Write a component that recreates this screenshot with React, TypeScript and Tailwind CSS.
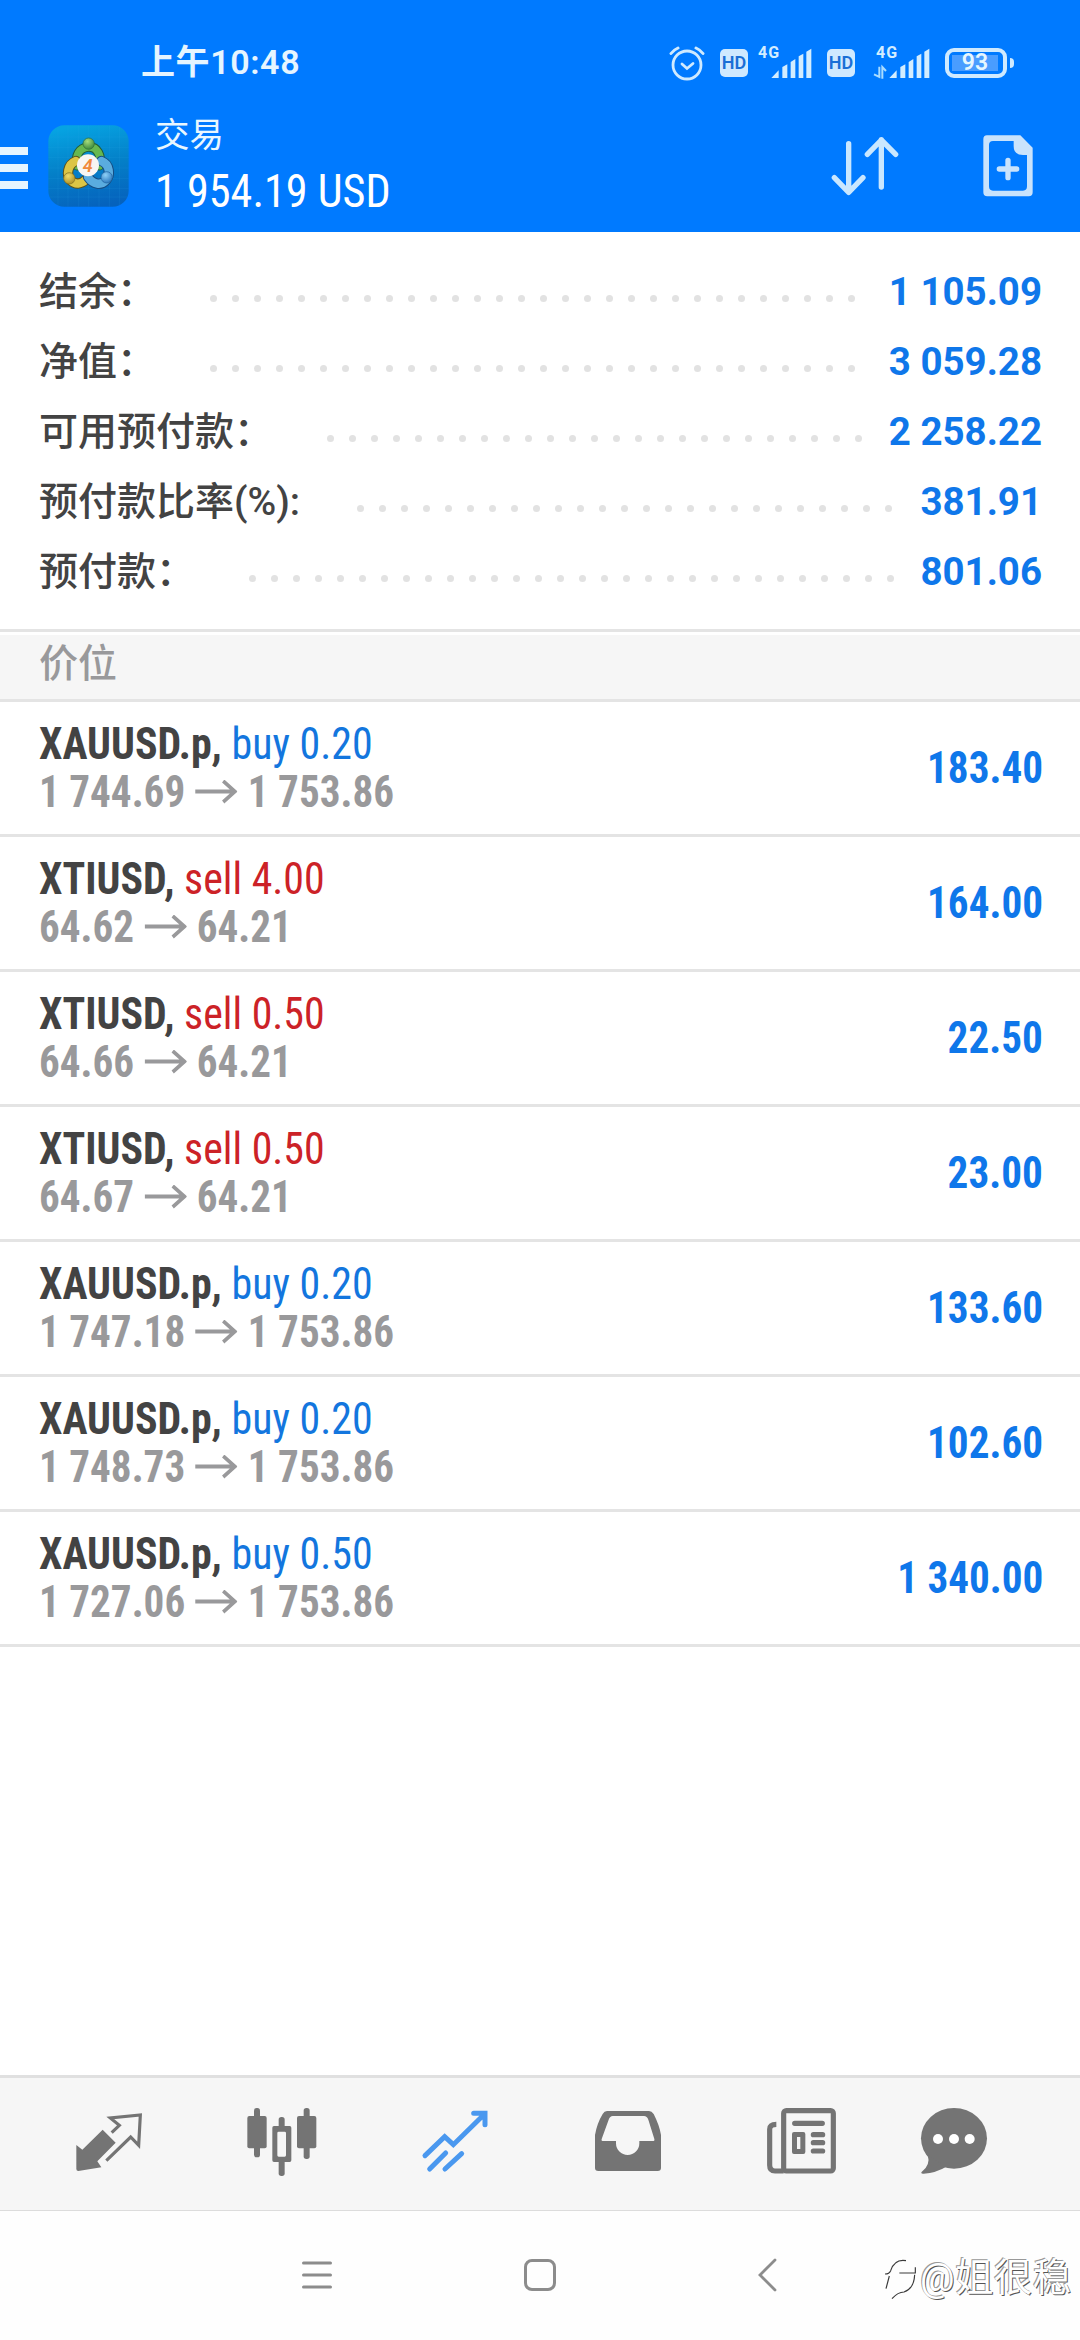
import { ReactNode } from 'react'
import clsx from 'clsx'

const summary = [
  { label: '结余：', value: '1 105.09', dots: 30 },
  { label: '净值：', value: '3 059.28', dots: 30 },
  { label: '可用预付款：', value: '2 258.22', dots: 25 },
  { label: '预付款比率(%):', value: '381.91', dots: 25 },
  { label: '预付款：', value: '801.06', dots: 30 },
]

const positions = [
  { symbol: 'XAUUSD.p', side: 'buy', volume: '0.20', open: '1 744.69', current: '1 753.86', profit: '183.40' },
  { symbol: 'XTIUSD', side: 'sell', volume: '4.00', open: '64.62', current: '64.21', profit: '164.00' },
  { symbol: 'XTIUSD', side: 'sell', volume: '0.50', open: '64.66', current: '64.21', profit: '22.50' },
  { symbol: 'XTIUSD', side: 'sell', volume: '0.50', open: '64.67', current: '64.21', profit: '23.00' },
  { symbol: 'XAUUSD.p', side: 'buy', volume: '0.20', open: '1 747.18', current: '1 753.86', profit: '133.60' },
  { symbol: 'XAUUSD.p', side: 'buy', volume: '0.20', open: '1 748.73', current: '1 753.86', profit: '102.60' },
  { symbol: 'XAUUSD.p', side: 'buy', volume: '0.50', open: '1 727.06', current: '1 753.86', profit: '1 340.00' },
]

function HdBadge() {
  return (
    <div className="w-7 h-7 rounded-[5px] bg-[#cfe9ff] flex items-center justify-center text-[18px] leading-none font-semibold text-[#1a6fd6]">
      HD
    </div>
  )
}

function Signal({ data }: { data?: boolean }) {
  return (
    <svg className="w-[60px] h-11 -mt-2" viewBox="0 -24 180 132" fill="#d3edff">
      <text x="12" y="38" fontSize="48" fontWeight="700" letterSpacing="3">4G</text>
      {data && (
        <path d="M22 65V96L6 88M31 101V66L42 78" fill="none" stroke="#a9dcff" strokeWidth="6" />
      )}
      <path d="M52 99L74 76V99ZM85 99V66L100 58V99ZM110 99V51L124 42V99ZM134 99V34L148 26V99ZM157 99V20L172 11V99Z" />
    </svg>
  )
}

function StatusBar() {
  return (
    <div className="h-[100px] pt-[25px] flex items-center">
      <span className="ml-[141px] text-[34px] font-semibold tracking-[0.6px] text-[#e6f5ff]">上午10:48</span>
      <div className="ml-auto flex items-center pr-[66px]">
        <svg className="w-9 h-9" viewBox="0 0 36 36" fill="none" stroke="#cfeaff" strokeLinecap="round">
          <circle cx="18" cy="20" r="14" strokeWidth="2.8" />
          <path d="M13 19L18 23.5L24 18.5" strokeWidth="2.8" />
          <path d="M2 8.5Q4.500 5 9 3M34 8.500Q31.500 5 27 3" strokeWidth="3" />
        </svg>
        <div className="ml-[15px]"><HdBadge /></div>
        <div className="ml-[6px]"><Signal /></div>
        <div className="ml-[13px]"><HdBadge /></div>
        <div className="ml-[17px]"><Signal data /></div>
        <div className="ml-[13px] w-[62px] h-[30px] rounded-[9px] border-4 border-[#cfeaff] p-[3px]">
          <div className="h-full w-[46px] bg-[#4a9dff] flex items-center justify-center text-[23px] leading-none font-semibold text-[#e6f7ff]">
            93
          </div>
        </div>
        <div className="ml-[3px] w-1 h-[10px] rounded-r-sm bg-[#cfeaff]" />
      </div>
    </div>
  )
}

function AppLogo() {
  return (
    <svg className="w-[81px] h-[82px]" viewBox="0 0 243 246">
      <defs>
        <linearGradient id="tile" x1="0.4" y1="0" x2="0.6" y2="1">
          <stop offset="0" stopColor="#06a3e2" />
          <stop offset="0.5" stopColor="#0480c8" />
          <stop offset="1" stopColor="#0562bd" />
        </linearGradient>
        <radialGradient id="green" cx="0.4" cy="0.3" r="0.8">
          <stop offset="0" stopColor="#a6dc7c" />
          <stop offset="1" stopColor="#2f7f35" />
        </radialGradient>
        <radialGradient id="gold" cx="0.4" cy="0.3" r="0.8">
          <stop offset="0" stopColor="#f0de6c" />
          <stop offset="1" stopColor="#a8871c" />
        </radialGradient>
        <radialGradient id="blue" cx="0.4" cy="0.3" r="0.8">
          <stop offset="0" stopColor="#8fd0f7" />
          <stop offset="1" stopColor="#1f6fb8" />
        </radialGradient>
      </defs>
      <rect x="1" y="1" width="241" height="244" rx="48" fill="url(#tile)" />
      <path d="M30 6V240M60 1V245M92 1V245M122 1V245M153 1V245M184 1V245M214 6V240M6 36H237M1 68H242M1 98H242M1 129H242M1 160H242M1 190H242M6 216H237" stroke="#3bb6ea" strokeOpacity="0.18" strokeWidth="2" />
      <g fill="none" strokeLinecap="round">
        <path d="M88 122C80 92 94 68 121 66S162 92 154 122" stroke="#235c36" strokeWidth="29" />
        <path d="M88 122C80 92 94 68 121 66S162 92 154 122" stroke="#66b850" strokeWidth="23" />
        <path d="M84 108C58 118 54 152 68 166S100 178 114 164" stroke="#5c531d" strokeWidth="31" />
        <path d="M84 108C58 118 54 152 68 166S100 178 114 164" stroke="#dcc545" strokeWidth="25" />
        <path d="M160 108C186 118 188 150 174 166S136 180 120 156" stroke="#164d83" strokeWidth="31" />
        <path d="M160 108C186 118 188 150 174 166S136 180 120 156" stroke="#5aacdf" strokeWidth="25" />
      </g>
      <circle cx="122" cy="56" r="17" fill="url(#green)" stroke="#2f6b38" strokeWidth="2" />
      <circle cx="64" cy="160" r="17" fill="url(#gold)" stroke="#7a6c22" strokeWidth="2" />
      <circle cx="176" cy="157" r="17" fill="url(#blue)" stroke="#1e5f9c" strokeWidth="2" />
      <circle cx="120" cy="121" r="33" fill="#f8f6f3" />
      <text x="119" y="140" textAnchor="middle" fontSize="54" fontWeight="600" fontStyle="italic" fill="#f08a3c">4</text>
    </svg>
  )
}

function TitleBar() {
  return (
    <div className="h-[132px] flex items-center text-[#e9f7ff]">
      <div className="w-7 flex flex-col gap-[9px] mt-[3px]">
        <div className="h-2 bg-[#e6f5ff]" />
        <div className="h-2 bg-[#e6f5ff]" />
        <div className="h-2 bg-[#e6f5ff]" />
      </div>
      <div className="ml-5"><AppLogo /></div>
      <div className="ml-[26px] pb-[6px] flex flex-col">
        <span className="text-[34.5px] leading-[56px]">交易</span>
        <span className="text-[47px] leading-[56px] font-['Roboto_Condensed'] text-white origin-left scale-x-[0.94]">1 954.19 USD</span>
      </div>
      <svg className="ml-auto w-[70px] h-[62px]" viewBox="0 0 210 186" fill="none" stroke="#c9e7ff" strokeWidth="16" strokeLinecap="round" strokeLinejoin="round">
        <path d="M56 26V168M13 128L56 172L99 128" />
        <path d="M154 156V14M112 58L154 15L197 58" />
      </svg>
      <svg className="ml-[83px] mr-[47px] w-[50px] h-[62px]" viewBox="0 0 150 186">
        <path fillRule="evenodd" fill="#c9e3fc" d="M12 1H112L149 38V172Q149 184 137 184H13Q1 184 1 172V13Q1 1 12 1ZM92 18H30Q18 18 18 30V154Q18 167 30 167H120Q132 167 132 154V60H120Q92 60 92 34Z" />
        <path d="M75 76V128M49 102H101" stroke="#c9e3fc" strokeWidth="16" strokeLinecap="round" />
      </svg>
    </div>
  )
}

function PositionRow({ position }: { position: (typeof positions)[number] }) {
  return (
    <div className="h-[135px] border-b-[3px] border-[#e4e4e4] pl-[39px] pr-[37px] flex items-center justify-between font-['Roboto_Condensed']">
      <div className="text-[44px] leading-[48px]">
        <div className="origin-left scale-x-[0.952]">
          <span className="font-bold text-[#434343]">{position.symbol},</span>{' '}
          <span className={clsx(position.side === 'buy' ? 'text-[#1376de]' : 'text-[#cc2227]')}>
            {position.side} {position.volume}
          </span>
        </div>
        <div className="flex items-center font-bold text-[#99999b] origin-left scale-x-[0.935]">
          <span>{position.open}</span>
          <svg className="w-[45px] h-6 mx-[11px]" viewBox="0 0 45 24" fill="none" stroke="#99999b" strokeWidth="3.8">
            <path d="M0 11.500H42M30 1L42.500 11.500L30 22" />
          </svg>
          <span>{position.current}</span>
        </div>
      </div>
      <div className="text-[44px] leading-[48px] font-bold text-[#0f77ea] origin-right scale-x-[0.935]">{position.profit}</div>
    </div>
  )
}

function Tab({ viewBox, last, children }: { viewBox: string; last?: boolean; children: ReactNode }) {
  return (
    <div className={clsx('flex items-center justify-center', last ? 'w-[133px]' : 'w-[173px]')}>
      <svg className="w-20 h-20" viewBox={viewBox} fill="#747474">
        {children}
      </svg>
    </div>
  )
}

function TabBar() {
  return (
    <div className="h-[136px] border-t-[3px] border-b border-t-[#e0e0e0] border-b-[#dcdcdc] bg-[#f6f6f6] pl-[22px] flex">
      <Tab viewBox="26 42 240 240">
        <path d="M127 119L166 158L111 214L123 232L54 243Q48 243 48 237V165L66 179Z" />
        <path d="M154 128L177 106L150 84L240 75L235 166L211 141L138 212" fill="none" stroke="#747474" strokeWidth="9.500" />
      </Tab>
      <Tab viewBox="544 42 240 240">
        <rect x="560" y="78" width="58" height="97" rx="6" />
        <rect x="580" y="54" width="18" height="148" rx="8" />
        <rect x="709" y="78" width="58" height="97" rx="6" />
        <rect x="729" y="54" width="18" height="153" rx="8" />
        <rect x="654" y="81" width="18" height="40" rx="8" />
        <rect x="654" y="205" width="18" height="53" rx="8" />
        <path fillRule="evenodd" d="M640 108H687Q692 108 692 113V211Q692 216 687 216H640Q635 216 635 211V113Q635 108 640 108ZM654 125Q650 125 650 129V196Q650 200 654 200H672Q676 200 676 196V129Q676 125 672 125Z" />
      </Tab>
      <Tab viewBox="1062 42 240 240">
        <path
          d="M1092 197L1151 140L1177 164L1270 73M1238 70H1272V104M1106 237L1154 189M1152 237L1202 191"
          fill="none"
          stroke="#4a98ef"
          strokeWidth="15"
          strokeLinecap="round"
        />
      </Tab>
      <Tab viewBox="23 42 240 240">
        <path
          fillRule="evenodd"
          d="M80 63H206Q214 63 220 72Q237 105 242 135V234Q242 243 232 243H54Q44 243 44 234V135Q50 100 67 72Q72 63 80 63ZM97 78Q89 78 85 89L64 147Q62 152 66 153H107V160A35 35 0 0 0 177 160V153H220Q224 152 222 147L204 89Q200 78 191 78Z"
        />
      </Tab>
      <Tab viewBox="542 42 240 240">
        <g fill="none" stroke="#747474" strokeWidth="15.500" strokeLinecap="round">
          <rect x="610" y="62" width="149" height="181" rx="8" />
          <path d="M588 103Q568 103 568 118V226Q568 243 584 243H610" strokeLinecap="butt" />
          <path d="M643 100H726M699 134H727M699 158H727M699 183H727" />
        </g>
        <path fillRule="evenodd" d="M641 126H669Q675 126 675 132V186Q675 192 669 192H641Q635 192 635 186V132Q635 126 641 126ZM650 141V177H660V141Z" />
      </Tab>
      <Tab viewBox="999 42 240 240" last>
        <ellipse cx="1119" cy="145" rx="99" ry="91" />
        <path d="M1040 195Q1050 225 1021 247Q1019 252 1028 251Q1066 248 1096 230Z" />
        <g fill="#fff">
          <circle cx="1071" cy="147" r="15" />
          <circle cx="1119" cy="147" r="15" />
          <circle cx="1166" cy="147" r="15" />
        </g>
      </Tab>
    </div>
  )
}

function NavBar() {
  return (
    <div className="relative h-[129px] pb-[2px] bg-[#fefefe] flex items-center pl-[301px]">
      <svg className="w-8 h-9" viewBox="0 0 32 36" stroke="#8c8c8c" strokeWidth="3" strokeLinecap="round">
        <path d="M2.500 6H29.500M2.500 18H29.500M2.500 30H29.500" />
      </svg>
      <div className="ml-[191px] w-8 h-8 rounded-[8px] border-[3px] border-[#8c8c8c]" />
      <svg className="ml-[201px] w-5 h-9" viewBox="0 0 20 36" fill="none" stroke="#8c8c8c" strokeWidth="2.800" strokeLinecap="round">
        <path d="M18 3L3 18L18 33" />
      </svg>
      <div className="absolute left-[884px] top-[39px] flex items-center">
        <svg className="w-9 h-12" viewBox="0 0 108 144" fill="none" stroke="#3a3a3a" strokeWidth="3.500">
          <path d="M3 60Q16 60 20 50Q32 14 66 20M16 66L6 104M46 57H94V40M92 62Q90 104 60 114Q42 114 24 134" />
        </svg>
        <span className="text-[38.5px] leading-[56px] tracking-[0.4px] text-white [text-shadow:1px_1px_0px_#555,-1px_-1px_0px_#999]">@姐很稳</span>
      </div>
    </div>
  )
}

export default function App() {
  return (
    <div className="w-[1080px] h-[2340px] bg-white flex flex-col overflow-hidden font-['Roboto','Noto_Sans_CJK_SC',sans-serif]">
      <header className="h-[232px] bg-[#007aff]">
        <StatusBar />
        <TitleBar />
      </header>

      {/* Account summary */}
      <div className="pt-[25px] pb-[22px] border-b-[3px] border-[#e4e4e4]">
        {summary.map(row => (
          <div key={row.label} className="h-[70px] pl-[39px] pr-[38px] flex items-center font-medium">
            <span className="text-[39px] text-[#434343]">{row.label}</span>
            <div className={clsx('flex mt-[12px]', row.label.endsWith(':') ? 'ml-[49px]' : 'ml-[46px]')}>
              {Array.from({ length: row.dots }).map((_, i) => (
                <div key={i} className="w-[22px] flex justify-center">
                  <div className="w-[7px] h-[7px] rounded-full bg-[#e2e2e2]" />
                </div>
              ))}
            </div>
            <span className="ml-auto text-[38.5px] font-bold text-[#0f77ea]">{row.value}</span>
          </div>
        ))}
      </div>

      <div className="mt-[3px] h-[67px] border-b-[3px] border-[#e4e4e4] bg-[#f6f6f6] px-[39px] pb-[6px] flex items-center text-[39px] font-medium text-[#99999b]">
        价位
      </div>

      <div className="flex-1">
        {positions.map((position, i) => (
          <PositionRow key={i} position={position} />
        ))}
      </div>

      <TabBar />
      <NavBar />
    </div>
  )
}
